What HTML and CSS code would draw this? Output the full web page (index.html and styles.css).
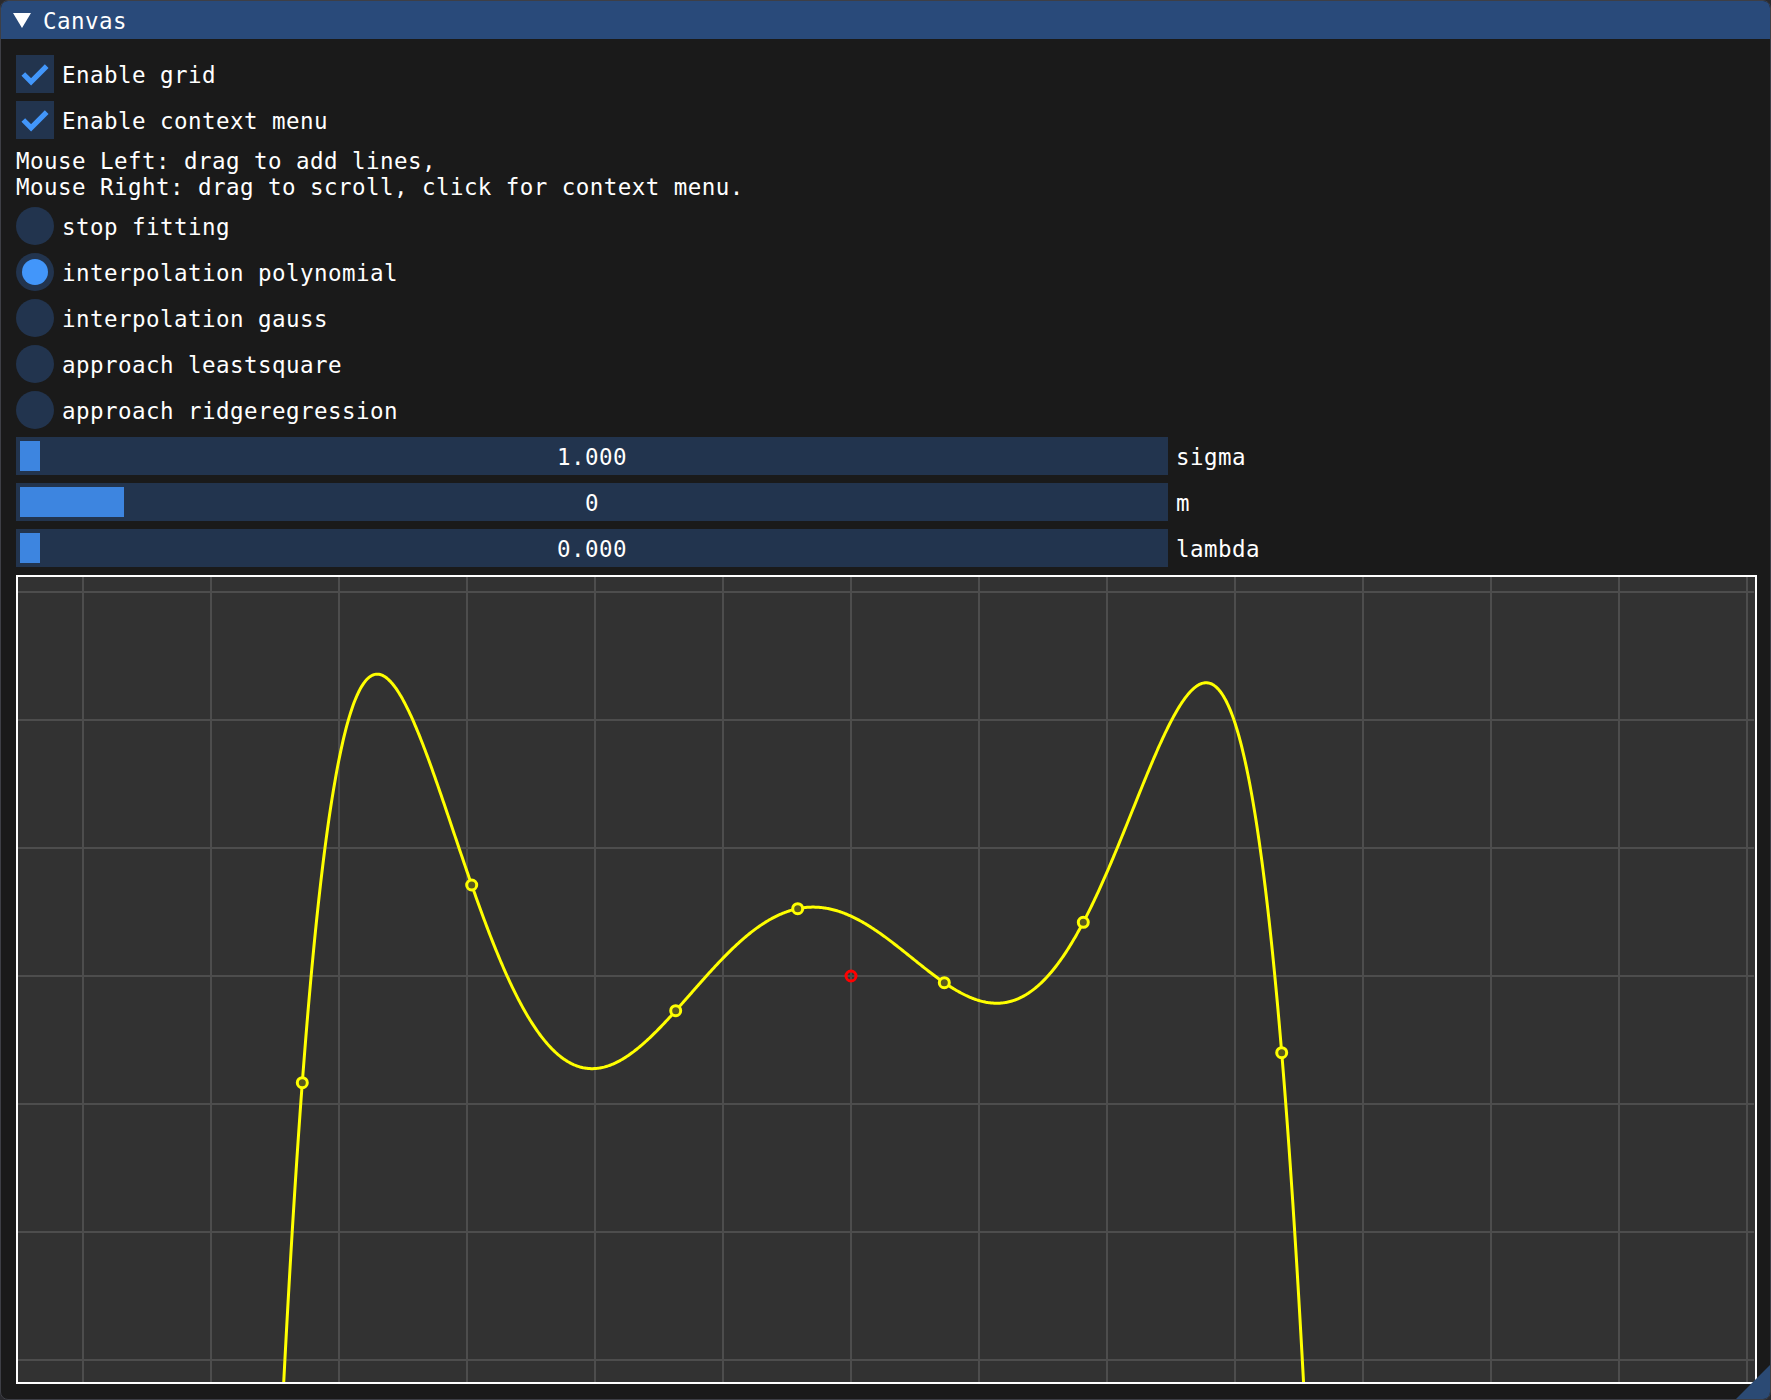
FILE: index.html
```html
<!DOCTYPE html>
<html>
<head>
<meta charset="utf-8">
<title>Canvas</title>
<link rel="stylesheet" href="styles.css">
</head>
<body>
<div class="window">
  <div class="titlebar">
    <svg class="arrow" width="18" height="15" viewBox="0 0 18 15"><polygon points="0,0 18,0 9,15" fill="#ffffff"/></svg>
    <span class="title">Canvas</span>
  </div>
  <div class="content">
    <div class="row">
      <span class="checkbox"><svg width="38" height="38" viewBox="0 0 38 38"><polyline points="7.3,19 15.1,26.8 30.7,11.2" fill="none" stroke="#4296fa" stroke-width="5.2"/></svg></span>
      <span class="label">Enable grid</span>
    </div>
    <div class="row">
      <span class="checkbox"><svg width="38" height="38" viewBox="0 0 38 38"><polyline points="7.3,19 15.1,26.8 30.7,11.2" fill="none" stroke="#4296fa" stroke-width="5.2"/></svg></span>
      <span class="label">Enable context menu</span>
    </div>
    <div class="text">Mouse Left: drag to add lines,
Mouse Right: drag to scroll, click for context menu.</div>
    <div class="row"><span class="radio"></span><span class="label">stop fitting</span></div>
    <div class="row"><span class="radio on"></span><span class="label">interpolation polynomial</span></div>
    <div class="row"><span class="radio"></span><span class="label">interpolation gauss</span></div>
    <div class="row"><span class="radio"></span><span class="label">approach leastsquare</span></div>
    <div class="row"><span class="radio"></span><span class="label">approach ridgeregression</span></div>
    <div class="row">
      <div class="slider"><span class="grab" style="width:20px"></span><span class="value">1.000</span></div>
      <span class="label">sigma</span>
    </div>
    <div class="row">
      <div class="slider"><span class="grab" style="width:104px"></span><span class="value">0</span></div>
      <span class="label">m</span>
    </div>
    <div class="row">
      <div class="slider"><span class="grab" style="width:20px"></span><span class="value">0.000</span></div>
      <span class="label">lambda</span>
    </div>
    <div class="canvas">
      <svg class="plot" width="1736" height="805" viewBox="0 0 1736 805">
        <g class="grid" stroke="#4d4d4d" stroke-width="2">
          <line x1="65" y1="0" x2="65" y2="805"/>
          <line x1="193" y1="0" x2="193" y2="805"/>
          <line x1="321" y1="0" x2="321" y2="805"/>
          <line x1="449" y1="0" x2="449" y2="805"/>
          <line x1="577" y1="0" x2="577" y2="805"/>
          <line x1="705" y1="0" x2="705" y2="805"/>
          <line x1="833" y1="0" x2="833" y2="805"/>
          <line x1="961" y1="0" x2="961" y2="805"/>
          <line x1="1089" y1="0" x2="1089" y2="805"/>
          <line x1="1217" y1="0" x2="1217" y2="805"/>
          <line x1="1345" y1="0" x2="1345" y2="805"/>
          <line x1="1473" y1="0" x2="1473" y2="805"/>
          <line x1="1601" y1="0" x2="1601" y2="805"/>
          <line x1="1729" y1="0" x2="1729" y2="805"/>
          <line x1="0" y1="15" x2="1736" y2="15"/>
          <line x1="0" y1="143" x2="1736" y2="143"/>
          <line x1="0" y1="271" x2="1736" y2="271"/>
          <line x1="0" y1="399" x2="1736" y2="399"/>
          <line x1="0" y1="527" x2="1736" y2="527"/>
          <line x1="0" y1="655" x2="1736" y2="655"/>
          <line x1="0" y1="783" x2="1736" y2="783"/>
        </g>
        <path id="curve" d="" fill="none" stroke="#ffff00" stroke-width="3" stroke-linejoin="round"/>
        <g fill="#5a5a1e" stroke="#ffff00" stroke-width="3">
          <circle class="pt" cx="284.3" cy="505.7" r="5"/>
          <circle class="pt" cx="453.7" cy="308" r="5"/>
          <circle class="pt" cx="657.7" cy="433.7" r="5"/>
          <circle class="pt" cx="779.7" cy="331.7" r="5"/>
          <circle class="pt" cx="926.3" cy="405.7" r="5"/>
          <circle class="pt" cx="1065.3" cy="345.3" r="5"/>
          <circle class="pt" cx="1263.7" cy="475.7" r="5"/>
        </g>
        <circle cx="833" cy="399" r="5" fill="none" stroke="#ff0000" stroke-width="3"/>
      </svg>
    </div>
  </div>
  <div class="grip"></div>
</div>
<script src="script.js"></script>
</body>
</html>
```

FILE: styles.css
```css
html, body {
  margin: 0;
  padding: 0;
  background: #2a2a2e;
}

.window {
  position: relative;
  width: 1771px;
  height: 1400px;
  box-sizing: border-box;
  background: #1a1a1a;
  border: 1px solid #3e3f46;
  border-radius: 8px;
  overflow: hidden;
  font-family: "DejaVu Sans Mono", "Liberation Mono", monospace;
  font-size: 22.5px;
  letter-spacing: 0.45px;
  color: #ffffff;
}

.titlebar {
  height: 38px;
  background: #294a7a;
  display: flex;
  align-items: center;
  padding-left: 12px;
}

.arrow {
  display: block;
  margin-right: 12px;
}

.title {
  line-height: 26px;
  padding-top: 1px;
}

.content {
  display: flex;
  flex-direction: column;
  gap: 8px;
  padding: 16px 14px 0 15px;
}

.row {
  display: flex;
  align-items: center;
  height: 38px;
  gap: 8px;
}

.label {
  line-height: 26px;
  padding-top: 1px;
  white-space: pre;
}

.checkbox {
  width: 38px;
  height: 38px;
  background: #22344e;
  flex: none;
}

.checkbox svg {
  display: block;
}

.radio {
  width: 38px;
  height: 38px;
  border-radius: 50%;
  background: #22344e;
  flex: none;
  display: flex;
  align-items: center;
  justify-content: center;
}

.radio.on::after {
  content: "";
  width: 26px;
  height: 26px;
  border-radius: 50%;
  background: #4296fa;
}

.text {
  line-height: 26px;
  white-space: pre;
  padding-top: 1px;
  height: 51px;
}

.slider {
  position: relative;
  width: 1152px;
  height: 38px;
  flex: none;
  background: #22344e;
  display: flex;
  align-items: center;
  justify-content: center;
}

.grab {
  position: absolute;
  left: 4px;
  top: 4px;
  bottom: 4px;
  background: #3d85e0;
}

.value {
  position: relative;
  line-height: 26px;
  padding-top: 1px;
}

.canvas {
  width: 1741px;
  height: 809px;
  box-sizing: border-box;
  border: 2px solid #ffffff;
  background: #323232;
}

.plot {
  display: block;
  overflow: hidden;
}

.grip {
  position: absolute;
  right: 0;
  bottom: 0;
  width: 34px;
  height: 34px;
  background: #2b4a74;
  clip-path: polygon(100% 0, 100% 100%, 0 100%);
}
```

FILE: script.js
```js
(function () {
  var pts = Array.prototype.map.call(document.querySelectorAll('.pt'), function (c) {
    return [parseFloat(c.getAttribute('cx')), parseFloat(c.getAttribute('cy'))];
  });
  function poly(x) {
    var s = 0;
    for (var i = 0; i < pts.length; i++) {
      var t = pts[i][1];
      for (var j = 0; j < pts.length; j++) {
        if (j !== i) t *= (x - pts[j][0]) / (pts[i][0] - pts[j][0]);
      }
      s += t;
    }
    return s;
  }
  var d = '';
  for (var x = 150; x <= 1450; x += 1) {
    var y = poly(x);
    if (y < -4000) y = -4000;
    if (y > 4000) y = 4000;
    d += (d ? 'L' : 'M') + x + ' ' + y.toFixed(2);
  }
  document.getElementById('curve').setAttribute('d', d);
})();
```
